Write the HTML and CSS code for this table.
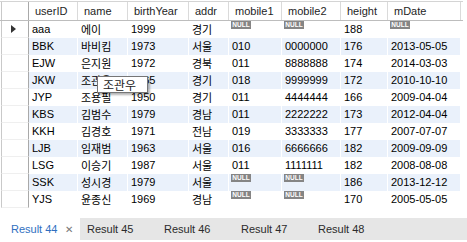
FILE: index.html
```html
<!DOCTYPE html>
<html lang="en">
<head>
  <meta charset="UTF-8" />
  <title>Result 44</title>
  <link rel="stylesheet" href="styles.css">
</head>
<body>

  <div class="grid">
    <div class="row head">
      <div class="rowhead"></div>
      <div class="cell">userID</div>
      <div class="cell">name</div>
      <div class="cell">birthYear</div>
      <div class="cell">addr</div>
      <div class="cell">mobile1</div>
      <div class="cell">mobile2</div>
      <div class="cell">height</div>
      <div class="cell">mDate</div>
    </div>

    <div class="row">
      <div class="rowhead"><span class="arrow"></span></div>
      <div class="cell">aaa</div>
      <div class="cell ko">에이</div>
      <div class="cell">1999</div>
      <div class="cell ko">경기</div>
      <div class="cell null"><span class="badge">NULL</span></div>
      <div class="cell null"><span class="badge">NULL</span></div>
      <div class="cell">188</div>
      <div class="cell null"><span class="badge">NULL</span></div>
    </div>
    <div class="row alt">
      <div class="rowhead"></div>
      <div class="cell">BBK</div>
      <div class="cell ko">바비킴</div>
      <div class="cell">1973</div>
      <div class="cell ko">서울</div>
      <div class="cell">010</div>
      <div class="cell">0000000</div>
      <div class="cell">176</div>
      <div class="cell">2013-05-05</div>
    </div>
    <div class="row">
      <div class="rowhead"></div>
      <div class="cell">EJW</div>
      <div class="cell ko">은지원</div>
      <div class="cell">1972</div>
      <div class="cell ko">경북</div>
      <div class="cell">011</div>
      <div class="cell">8888888</div>
      <div class="cell">174</div>
      <div class="cell">2014-03-03</div>
    </div>
    <div class="row alt">
      <div class="rowhead"></div>
      <div class="cell">JKW</div>
      <div class="cell ko">조관우</div>
      <div class="cell">1965</div>
      <div class="cell ko">경기</div>
      <div class="cell">018</div>
      <div class="cell">9999999</div>
      <div class="cell">172</div>
      <div class="cell">2010-10-10</div>
    </div>
    <div class="row">
      <div class="rowhead"></div>
      <div class="cell">JYP</div>
      <div class="cell ko">조용필</div>
      <div class="cell">1950</div>
      <div class="cell ko">경기</div>
      <div class="cell">011</div>
      <div class="cell">4444444</div>
      <div class="cell">166</div>
      <div class="cell">2009-04-04</div>
    </div>
    <div class="row alt">
      <div class="rowhead"></div>
      <div class="cell">KBS</div>
      <div class="cell ko">김범수</div>
      <div class="cell">1979</div>
      <div class="cell ko">경남</div>
      <div class="cell">011</div>
      <div class="cell">2222222</div>
      <div class="cell">173</div>
      <div class="cell">2012-04-04</div>
    </div>
    <div class="row">
      <div class="rowhead"></div>
      <div class="cell">KKH</div>
      <div class="cell ko">김경호</div>
      <div class="cell">1971</div>
      <div class="cell ko">전남</div>
      <div class="cell">019</div>
      <div class="cell">3333333</div>
      <div class="cell">177</div>
      <div class="cell">2007-07-07</div>
    </div>
    <div class="row alt">
      <div class="rowhead"></div>
      <div class="cell">LJB</div>
      <div class="cell ko">임재범</div>
      <div class="cell">1963</div>
      <div class="cell ko">서울</div>
      <div class="cell">016</div>
      <div class="cell">6666666</div>
      <div class="cell">182</div>
      <div class="cell">2009-09-09</div>
    </div>
    <div class="row">
      <div class="rowhead"></div>
      <div class="cell">LSG</div>
      <div class="cell ko">이승기</div>
      <div class="cell">1987</div>
      <div class="cell ko">서울</div>
      <div class="cell">011</div>
      <div class="cell">1111111</div>
      <div class="cell">182</div>
      <div class="cell">2008-08-08</div>
    </div>
    <div class="row alt">
      <div class="rowhead"></div>
      <div class="cell">SSK</div>
      <div class="cell ko">성시경</div>
      <div class="cell">1979</div>
      <div class="cell ko">서울</div>
      <div class="cell null"><span class="badge">NULL</span></div>
      <div class="cell null"><span class="badge">NULL</span></div>
      <div class="cell">186</div>
      <div class="cell">2013-12-12</div>
    </div>
    <div class="row">
      <div class="rowhead"></div>
      <div class="cell">YJS</div>
      <div class="cell ko">윤종신</div>
      <div class="cell">1969</div>
      <div class="cell ko">경남</div>
      <div class="cell null"><span class="badge">NULL</span></div>
      <div class="cell null"><span class="badge">NULL</span></div>
      <div class="cell">170</div>
      <div class="cell">2005-05-05</div>
    </div>

    <div class="tooltip">조관우</div>
  </div>

  <div class="tabs">
    <div class="tab active">Result 44 <span class="close">✕</span></div>
    <div class="tab">Result 45</div>
    <div class="tab">Result 46</div>
    <div class="tab">Result 47</div>
    <div class="tab">Result 48</div>
  </div>

</body>
</html>
```

FILE: styles.css
```css
body {
  margin: 0;
  padding: 0;
  background: #ffffff;
  font-family: 'Liberation Sans', 'Noto Sans CJK KR', sans-serif;
  font-size: 11px;
  color: #000;
}

.grid {
  position: relative;
  padding-top: 1px;
  height: 207px;
}

.row {
  display: grid;
  grid-template-columns: 29px 49px 50px 61px 40px 53px 59px 47px 73px;
  height: 17px;
}

.row .cell {
  padding-left: 3px;
  line-height: 17px;
  white-space: nowrap;
  overflow: hidden;
  border-right: 1px solid #fff;
}

.row.alt .cell {
  background-color: #eaf1fb;
}

.rowhead {
  margin-left: 1px;
  border-left: 1px solid #c9c9c9;
  border-right: 1px solid #a9a9a9;
  border-bottom: 1px solid #efefef;
  box-sizing: border-box;
  display: flex;
  align-items: center;
  padding-left: 9px;
}

.arrow {
  width: 0;
  height: 0;
  border-top: 4px solid transparent;
  border-bottom: 4px solid transparent;
  border-left: 5px solid #333;
}

.row.head {
  height: 20px;
  box-sizing: border-box;
  border-top: 1px solid #d4d4d4;
  border-bottom: 1px solid #bdbdbd;
  width: 463px;
}

.row.head .cell {
  padding-left: 6px;
  line-height: 18px;
  color: #1e1e1e;
  border-right: 1px solid #dadada;
}

.row.head .rowhead {
  border-bottom: none;
}

.cell.ko {
  line-height: 14px;
  padding-top: 1px;
  font-family: 'Noto Sans CJK KR', sans-serif;
}

.cell.null {
  line-height: 0;
  padding-left: 2px;
}

.badge {
  display: inline-block;
  background-color: #858585;
  color: #fff;
  font-family: 'Liberation Sans', sans-serif;
  font-size: 6.5px;
  font-weight: bold;
  line-height: 8px;
  height: 8px;
  width: 20px;
  text-align: center;
}

.tooltip {
  position: absolute;
  left: 97px;
  top: 76px;
  width: 44px;
  height: 15px;
  background: #fff;
  border: 1px solid #767676;
  box-shadow: 2px 2px 2px rgba(0, 0, 0, 0.3);
  font-family: 'Noto Sans CJK KR', sans-serif;
  font-size: 12px;
  line-height: 15px;
  padding-left: 5px;
  box-sizing: content-box;
  color: #222;
}

.tabs {
  display: flex;
  margin-top: 10px;
  height: 22px;
  background-color: #e6e6e6;
}

.tab {
  width: 77px;
  padding-left: 7px;
  box-sizing: border-box;
  line-height: 22px;
  color: #2b2b2b;
  font-size: 11px;
}

.tab.active {
  width: 80px;
  padding-left: 11px;
  background-color: #fff;
  color: #2f6fbf;
}

.close {
  color: #777;
  font-size: 10px;
  margin-left: 4px;
}
```
